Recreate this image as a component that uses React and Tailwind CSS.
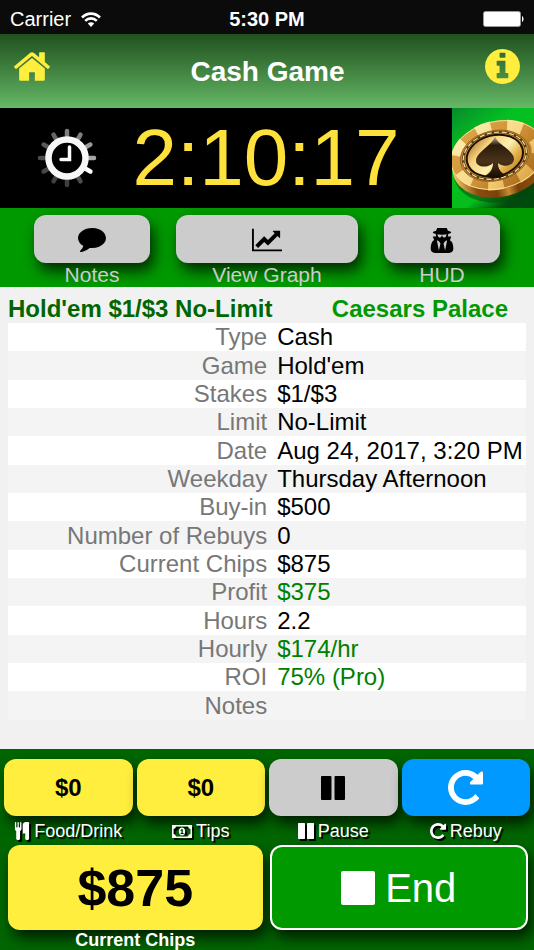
import React, { useState } from 'react';

const SHADOW = 'shadow-[4px_8px_14px_rgba(0,0,0,0.7)]';
const TEXT_SHADOW = '[text-shadow:2px_2px_1px_#000]';
const ICON_SHADOW = 'drop-shadow-[2px_2px_0px_#000]';

const ICONS = {
  home: {
    box: '89 253 1615 1283',
    d: 'M1472 992v480q0 26-19 45t-45 19h-384v-384h-256v384h-384q-26 0-45-19t-19-45v-480q0-1 .5-3t.5-3l575-474 575 474q1 2 1 6zm223-69l-62 74q-8 9-21 11h-3q-13 0-21-7l-692-577-692 577q-12 8-24 7-13-2-21-11l-62-74q-8-10-7-23.5t11-21.5l719-599q32-26 76-26t76 26l244 204v-195q0-14 9-23t23-9h192q14 0 23 9t9 23v408l219 182q10 8 11 21.5t-7 23.5z',
  },
  info: {
    box: '128 128 1536 1536',
    d: 'M1152 1376v-160q0-14-9-23t-23-9h-96v-512q0-14-9-23t-23-9h-320q-14 0-23 9t-9 23v160q0 14 9 23t23 9h96v320h-96q-14 0-23 9t-9 23v160q0 14 9 23t23 9h448q14 0 23-9t9-23zm-128-896v-160q0-14-9-23t-23-9h-192q-14 0-23 9t-9 23v160q0 14 9 23t23 9h192q14 0 23-9t9-23zm640 416q0 209-103 385.5t-279.5 279.5-385.5 103-385.5-103-279.5-279.5-103-385.5 103-385.5 279.5-279.5 385.5-103 385.5 103 279.5 279.5 103 385.5z',
  },
  comment: {
    box: '0 256 1792 1536',
    d: 'M1792 896q0 174-120 321.5t-326 233-450 85.5q-70 0-145-8-198 175-460 242-49 14-114 22-17 2-30.5-9t-17.5-29v-1q-3-4-.5-12t2-10 4.5-9.5l6-9 7-8.5 8-9q7-8 31-34.5t34.5-38 31-39.5 32.5-51 27-59 26-76q-157-89-247.5-220t-90.5-281q0-130 71-248.5t191-204.5 286-136.5 348-50.5q244 0 450 85.5t326 233 120 321.5z',
  },
  chart: {
    box: '0 128 2048 1536',
    d: 'M2048 1536v128h-2048v-1536h128v1408h1920zm-128-1248v435q0 21-19.5 29.5t-35.5-7.5l-121-121-633 633q-10 10-23 10t-23-10l-233-233-416 416-192-192 585-585q10-10 23-10t23 10l233 233 464-464-121-121q-16-16-7.5-35.5t29.5-19.5h435q14 0 23 9t9 23z',
  },
  spy: {
    box: '320 128 1408 1556',
    d: 'M832 1536l96-448-96-128-128-64zm384 0l128-640-128 64-96 128zm96-992q-2-4-4-6-10-8-96-8-70 0-167 19-7 2-21 2t-21-2q-97-19-167-19-86 0-96 8-2 2-4 6 2 18 4 27 2 3 7.5 6.5t7.5 10.5q2 4 7.5 20.5t7 20.5 7.5 17 8.5 17 9 14 12 13.5 14 9.5 17.5 8 20.5 4 24.5 2q36 0 59-12.5t32.5-30 14.5-34.5 11.5-29.5 17.5-12.5h12q11 0 17.5 12.5t11.5 29.5 14.5 34.5 32.5 30 59 12.5q13 0 24.5-2t20.5-4 17.5-8 14-9.5 12-13.5 9-14 8.5-17 7.5-17 7-20.5 7.5-20.5q2-7 7.5-10.5t7.5-6.5q2-9 4-27zm416 879q0 121-73 190t-194 69h-874q-121 0-194-69t-73-190q0-61 4.5-118t19-125.5 37.5-123.500 63.500-103.500 93.500-74.500l-90-220h214q-22-64-22-128 0-12 2-32-194-40-194-96 0-57 210-99 17-62 51.500-134t70.500-114q32-37 76-37 30 0 84 31t84 31 84-31 84-31q44 0 76 37 36 42 70.500 114t51.500 134q210 42 210 99 0 56-194 96 7 81-20 160h214l-82 225q63 33 107.500 96.500t65.500 143.500 29 151.500 8 148.500z',
  },
  cutlery: {
    box: '192 0 1408 1792',
    d: 'M832 64v640q0 61-35.5 111t-92.5 70v779q0 52-38 90t-90 38h-128q-52 0-90-38t-38-90v-779q-57-20-92.5-70t-35.5-111v-640q0-26 19-45t45-19 45 19 19 45v416q0 26 19 45t45 19 45-19 19-45v-416q0-26 19-45t45-19 45 19 19 45v416q0 26 19 45t45 19 45-19 19-45v-416q0-26 19-45t45-19 45 19 19 45zm768 0v1600q0 52-38 90t-90 38h-128q-52 0-90-38t-38-90v-512h-224q-13 0-22.5-9.5t-9.5-22.5v-800q0-132 94-226t226-94h256q26 0 45 19t19 45z',
  },
  money: {
    box: '0 0 20 13',
    d: 'M0 0h20v13H0zM4 1.5A2.7 2.7 0 0 1 1.5 4v5A2.7 2.7 0 0 1 4 11.5h12A2.7 2.7 0 0 1 18.5 9V4A2.7 2.7 0 0 1 16 1.5zM10 2.500c2 0 3.200 1.800 3.200 4s-1.200 4-3.200 4-3.200-1.800-3.200-4 1.200-4 3.200-4zM10.700 4H9.700L8.300 5.200l.6.8.6-.4v2.400h-1v1h3.200v-1h-1z',
  },
  pause: {
    box: '0 0 24 24',
    d: 'M1 0h8.5a1 1 0 0 1 1 1v22a1 1 0 0 1-1 1H1a1 1 0 0 1-1-1V1a1 1 0 0 1 1-1zM14.5 0H23a1 1 0 0 1 1 1v22a1 1 0 0 1-1 1h-8.5a1 1 0 0 1-1-1V1a1 1 0 0 1 1-1z',
  },
  repeat: {
    box: '128 128 1536 1536',
    d: 'M1664 256v448q0 26-19 45t-45 19h-448q-42 0-59-40-17-39 14-69l138-138q-148-137-349-137-104 0-198.5 40.5t-163.5 109.5-109.5 163.5-40.5 198.5 40.5 198.5 109.5 163.5 163.5 109.5 198.5 40.5q119 0 225-52t179-147q7-10 23-12 15 0 25 9l137 138q9 8 9.5 20.5t-7.5 22.5q-109 132-264 204.5t-327 72.5q-156 0-298-61t-245-164-164-245-61-298 61-298 164-245 245-164 298-61q147 0 284.5 55.5t244.5 156.5l130-129q29-31 70-14 39 17 39 59z',
  },
};

const ROWS = [
  { label: 'Type', value: 'Cash' },
  { label: 'Game', value: "Hold'em" },
  { label: 'Stakes', value: '$1/$3' },
  { label: 'Limit', value: 'No-Limit' },
  { label: 'Date', value: 'Aug 24, 2017, 3:20 PM' },
  { label: 'Weekday', value: 'Thursday Afternoon' },
  { label: 'Buy-in', value: '$500' },
  { label: 'Number of Rebuys', value: '0' },
  { label: 'Current Chips', value: '$875' },
  { label: 'Profit', value: '$375', positive: true },
  { label: 'Hours', value: '2.2' },
  { label: 'Hourly', value: '$174/hr', positive: true },
  { label: 'ROI', value: '75% (Pro)', positive: true },
  { label: 'Notes', value: '' },
];

const Icon = ({ name, className }) => (
  <svg viewBox={ICONS[name].box} className={className} fill="currentColor" fillRule="evenodd" aria-hidden="true">
    <path d={ICONS[name].d} />
  </svg>
);

const StatusBar = () => (
  <div className="grid h-[34px] grid-cols-3 items-center bg-[#0b0b0b] px-2.5 pt-1 text-xl leading-6 text-white">
    <div className="flex items-center gap-2.5">
      <span>Carrier</span>
      <svg viewBox="0 0 20 15" className="h-[15px] w-5" fill="none" stroke="currentColor" strokeWidth="2.6" aria-hidden="true">
        <path d="M1 5.5C6 .3 14 .3 19 5.5" />
        <path d="M4.2 8.8c3.3-3.300 8.300-3.300 11.600 0" />
        <path d="M6.8 11.500c2-1.600 4.400-1.600 6.400 0L10 15z" fill="currentColor" stroke="none" />
      </svg>
    </div>
    <span className="text-center font-bold">5:30 PM</span>
    <svg viewBox="0 0 41 16" className="h-4 w-[41px] justify-self-end" aria-hidden="true">
      <rect x="0.5" y="0.5" width="37" height="15" rx="2" fill="#fff" stroke="#999" />
      <path d="M39 5c2 .7 2 5.300 0 6z" fill="#fff" />
    </svg>
  </div>
);

// Clock face with a ring of ticks fading around it
const ClockSpinner = () => {
  const ticks = [0.5, 0.5, 0.6, 0.65, 1, 0.3, 0.25, 0.25, 0.28, 0.3, 0.35, 0.4];
  return (
    <svg viewBox="-30 -30 60 60" className="size-[60px]" fill="none" stroke="#fff" aria-hidden="true">
      {ticks.map((opacity, i) => (
        <line
          key={i}
          x1="0"
          y1="-19"
          x2="0"
          y2="-27"
          strokeWidth="4.5"
          strokeLinecap="round"
          opacity={opacity}
          transform={`rotate(${i * 30})`}
        />
      ))}
      <circle r="18.5" strokeWidth="6.5" fill="#000" stroke="#f7f7f7" />
      <path d="M2.5-11V1.5H-6" strokeWidth="3.5" strokeLinecap="round" />
    </svg>
  );
};

const PokerChip = () => (
  <svg viewBox="0 0 82 100" className="h-full w-[82px]" preserveAspectRatio="xMidYMid slice" aria-hidden="true">
    <defs>
      <linearGradient id="felt" x1="0" y1="0" x2="0.6" y2="1">
        <stop offset="0" stopColor="#078a2b" />
        <stop offset="0.35" stopColor="#04c022" />
        <stop offset="0.8" stopColor="#05bd1c" />
        <stop offset="1" stopColor="#004a0d" />
      </linearGradient>
      <linearGradient id="rim" x1="0" y1="0" x2="1" y2="1">
        <stop offset="0" stopColor="#e0ac4c" />
        <stop offset="0.5" stopColor="#cf9236" />
        <stop offset="1" stopColor="#9b5f16" />
      </linearGradient>
      <linearGradient id="rimLight" x1="0" y1="0" x2="1" y2="1">
        <stop offset="0" stopColor="#fff0b5" />
        <stop offset="0.6" stopColor="#f6d27a" />
        <stop offset="1" stopColor="#d59a3a" />
      </linearGradient>
      <linearGradient id="edge" x1="0" y1="0" x2="1" y2="0">
        <stop offset="0" stopColor="#f3c765" />
        <stop offset="0.2" stopColor="#8b4c0d" />
        <stop offset="0.4" stopColor="#7a420b" />
        <stop offset="0.52" stopColor="#c98a30" />
        <stop offset="0.62" stopColor="#7a420b" />
        <stop offset="0.8" stopColor="#8b4c0d" />
        <stop offset="1" stopColor="#4f2704" />
      </linearGradient>
      <linearGradient id="face" x1="0" y1="0" x2="1" y2="1">
        <stop offset="0" stopColor="#8f5a14" />
        <stop offset="0.3" stopColor="#f6d27c" />
        <stop offset="0.55" stopColor="#fff0b0" />
        <stop offset="0.75" stopColor="#e0a842" />
        <stop offset="1" stopColor="#a86a1c" />
      </linearGradient>
      <linearGradient id="spade" x1="0" y1="0" x2="0" y2="1">
        <stop offset="0" stopColor="#c4bca6" />
        <stop offset="0.22" stopColor="#2b1c0c" />
        <stop offset="0.6" stopColor="#4a3218" />
        <stop offset="1" stopColor="#140b02" />
      </linearGradient>
    </defs>
    <rect width="82" height="100" fill="url(#felt)" />
    <g transform="rotate(-14 46 48)">
      <ellipse cx="46" cy="59" rx="48" ry="35" fill="#073f0b" opacity="0.5" />
      <ellipse cx="46" cy="55" rx="48" ry="34" fill="url(#edge)" />
      <ellipse cx="46" cy="47" rx="48" ry="34" fill="url(#rim)" />
      <ellipse
        cx="46"
        cy="47"
        rx="41"
        ry="28"
        fill="none"
        stroke="url(#rimLight)"
        strokeWidth="13"
        strokeDasharray="15 16"
        strokeDashoffset="6"
      />
      <ellipse cx="46" cy="47" rx="47.5" ry="33.5" fill="none" stroke="#ffe8a8" strokeWidth="0.8" />
      <ellipse cx="43" cy="47" rx="35" ry="25" fill="#c48f3c" stroke="#8a5a1c" strokeWidth="0.8" />
      <ellipse cx="43" cy="47" rx="32" ry="23" fill="none" stroke="#5f3c0e" strokeWidth="2.5" />
      <ellipse cx="43" cy="47" rx="32" ry="23" fill="none" stroke="#f6dc9b" strokeWidth="1.2" strokeDasharray="5 2.5" />
      <ellipse cx="43" cy="47" rx="28.5" ry="20.5" fill="url(#face)" stroke="#1d1003" strokeWidth="2" />
    </g>
    <path
      d="M43 28c1 8 19 14 19 23 0 7-11 9-16 4 0 6 3 10 8 12-6 4-14 4-21 1 5-3 8-7 8-13-6 6-17 4-17-2 0-9 17-16 19-25z"
      fill="url(#spade)"
    />
  </svg>
);

const ToolbarItem = ({ label, className, children }) => (
  <button type="button" className={`flex flex-col ${className}`}>
    <span className={`flex h-[50px] items-center justify-center rounded-xl bg-[#ccc] pt-0.5 text-black ${SHADOW}`}>
      {children}
    </span>
    <span className="text-center text-[21px] leading-6 text-[#ccc]">{label}</span>
  </button>
);

const ActionItem = ({ label, icon, iconClass, className, onClick, children }) => (
  <button type="button" onClick={onClick} className="flex min-w-0 flex-1 flex-col gap-[3px]">
    <span className={`flex h-[57px] w-full items-center justify-center rounded-xl text-2xl font-bold ${SHADOW} ${className}`}>
      {children}
    </span>
    <span className={`relative flex w-full items-center justify-center gap-1 text-lg leading-6 text-white ${TEXT_SHADOW}`}>
      <Icon name={icon} className={`${iconClass} ${ICON_SHADOW}`} />
      {label}
    </span>
  </button>
);

const App = () => {
  const [paused, setPaused] = useState(false);

  return (
    <div className="flex min-h-screen flex-col bg-[#f1f1f1] font-['Liberation_Sans',Arial,sans-serif]">
      <StatusBar />

      {/* Title bar */}
      <header className="flex h-[74px] items-start justify-between bg-linear-to-b from-[#20521f] to-[#66b866] px-3.5 text-[#ffee3d]">
        <a href="#home" aria-label="Home" className="pt-[18px]">
          <Icon name="home" className="h-[29px] w-9" />
        </a>
        <h1 className="pt-5 text-[28px] leading-9 font-bold text-white">Cash Game</h1>
        <button type="button" aria-label="Information" className="pt-[15px]">
          <Icon name="info" className="size-[35px]" />
        </button>
      </header>

      {/* Session timer */}
      <section className="flex h-[100px] items-center bg-black">
        <div className="flex flex-1 items-center justify-center gap-9 pr-4">
          <ClockSpinner />
          <time className="text-[80px] leading-none text-[#ffe13b]">2:10:17</time>
        </div>
        <PokerChip />
      </section>

      {/* Session tools */}
      <nav className="flex h-[79px] gap-[26px] bg-[#009900] px-[34px] pt-[7px]">
        <ToolbarItem label="Notes" className="w-[116px]">
          <Icon name="comment" className="h-6 w-7" />
        </ToolbarItem>
        <ToolbarItem label="View Graph" className="flex-1">
          <Icon name="chart" className="h-6 w-[30px]" />
        </ToolbarItem>
        <ToolbarItem label="HUD" className="w-[116px]">
          <Icon name="spy" className="h-[25px] w-6" />
        </ToolbarItem>
      </nav>

      {/* Session details */}
      <main className="flex-1 px-2 pb-[29px]">
        <div className="flex h-9 items-center justify-between pt-2 pr-[18px] text-2xl font-bold">
          <h2 className="text-[#006600]">Hold'em $1/$3 No-Limit</h2>
          <h2 className="text-[#009900]">Caesars Palace</h2>
        </div>
        <table className="h-[397px] w-full border-collapse text-2xl leading-7">
          <tbody>
            {ROWS.map((row) => (
              <tr key={row.label} className="odd:bg-white even:bg-[#f4f4f4]">
                <th scope="row" className="w-[51%] p-0 pr-[5px] text-right font-normal text-[#777]">
                  {row.label}
                </th>
                <td className={`p-0 pl-[5px] whitespace-nowrap ${row.positive ? 'text-[#008000]' : 'text-black'}`}>
                  {row.value}
                </td>
              </tr>
            ))}
          </tbody>
        </table>
      </main>

      {/* Session actions */}
      <footer className="bg-[#006600] px-1 pt-2.5">
        <div className="flex gap-1">
          <ActionItem label="Food/Drink" icon="cutlery" iconClass="h-[18px] w-4" className="bg-[#ffee3d] text-black">
            $0
          </ActionItem>
          <ActionItem label="Tips" icon="money" iconClass="h-[13px] w-5" className="bg-[#ffee3d] text-black">
            $0
          </ActionItem>
          <ActionItem
            label="Pause"
            icon="pause"
            iconClass="size-4"
            className="bg-[#ccc] text-black"
            onClick={() => setPaused(!paused)}
          >
            <Icon name="pause" className="size-6" />
          </ActionItem>
          <ActionItem label="Rebuy" icon="repeat" iconClass="size-4" className="bg-[#0099ff] text-white">
            <Icon name="repeat" className="size-[35px]" />
          </ActionItem>
        </div>
        <div className="mt-0.5 flex gap-[7px] pr-0.5 pl-1">
          <button type="button" className="flex flex-1 flex-col">
            <span className={`flex h-[85px] w-full items-center justify-center rounded-xl bg-[#ffee3d] text-[52px] font-bold text-black ${SHADOW}`}>
              $875
            </span>
            <span className="w-full text-center text-lg leading-5 font-bold text-white">Current Chips</span>
          </button>
          <button
            type="button"
            className={`flex h-[85px] flex-1 items-center justify-center gap-2.5 rounded-xl border-2 border-white bg-[#009900] text-[40px] text-white ${SHADOW}`}
          >
            <span className="size-[34px] rounded-xs bg-white" />
            End
          </button>
        </div>
      </footer>
    </div>
  );
};

export default App;
